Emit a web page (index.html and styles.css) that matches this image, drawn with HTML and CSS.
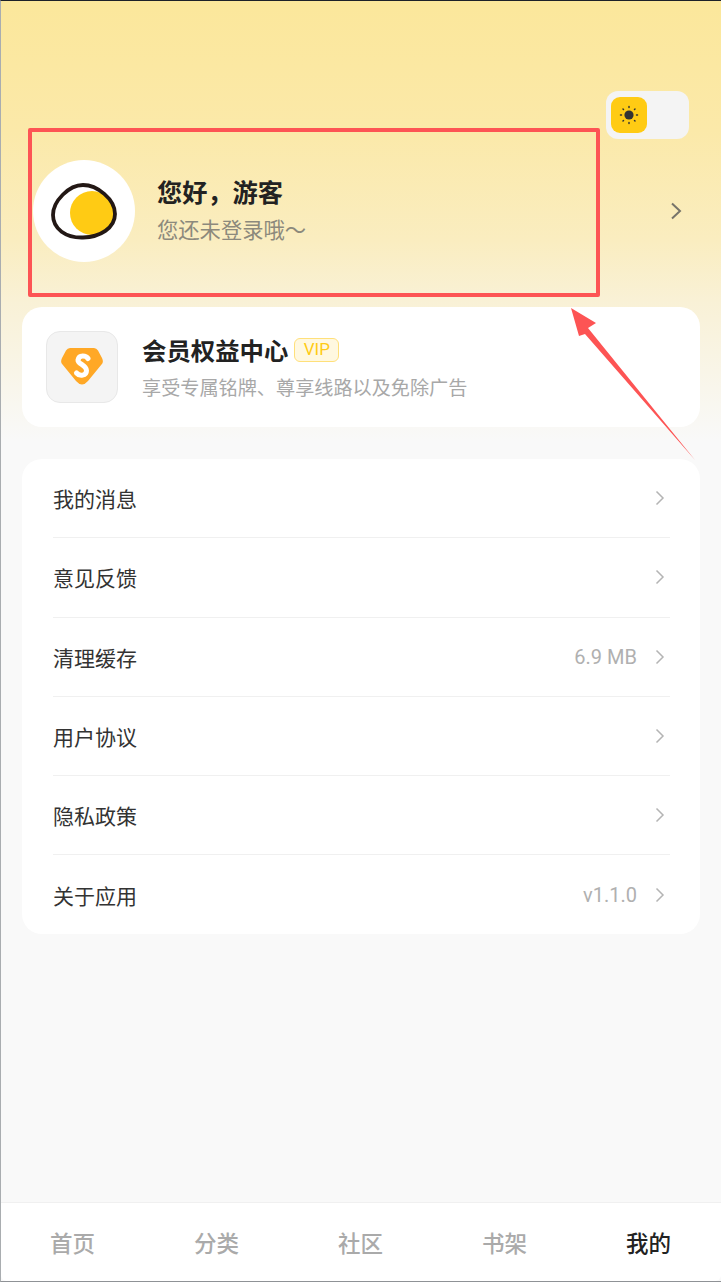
FILE: index.html
```html
<!DOCTYPE html>
<html lang="zh-CN">
<head>
	<meta charset="UTF-8">
	<meta name="viewport" content="width=device-width, initial-scale=1.0">
	<link rel="stylesheet" href="styles.css">
	<title>我的</title>
</head>
<body>
	<div class="app">
		<main class="page">
			<div class="theme-row">
				<div class="toggle">
					<div class="toggle-knob">
						<svg width="24" height="24" viewBox="0 0 24 24" aria-hidden="true">
							<circle cx="12" cy="12" r="4.600" fill="#333"/>
							<g stroke="#333" stroke-width="1.500" stroke-linecap="round">
								<path d="M12 3.500v1M12 19.500v1M3.500 12h1M19.500 12h1M6 6l.5 .5M17.500 17.500l.5 .5M6 18l.5-.5M17.500 6.500l.5-.5"/>
							</g>
						</svg>
					</div>
				</div>
			</div>
			<section class="profile">
				<div class="avatar">
					<svg width="68" height="58" viewBox="0 0 68 58" aria-hidden="true">
						<circle cx="42" cy="31" r="22" fill="#ffcb14"/>
						<path d="M3 33C3 19 19 3 33 3C47 3 65 17 65 32C65 46 50 55 33 55.500C16 56 3 47 3 33Z" fill="none" stroke="#231815" stroke-width="3.800"/>
					</svg>
				</div>
				<div class="profile-text">
					<div class="profile-name">您好，游客</div>
					<div class="profile-hint">您还未登录哦～</div>
				</div>
				<svg class="profile-arrow" width="12" height="18" viewBox="0 0 12 18" aria-hidden="true">
					<path d="M2 1.500L10 9L2 16.500" fill="none" stroke="#77746a" stroke-width="2"/>
				</svg>
			</section>
			<section class="card vip">
				<div class="vip-icon">
					<svg class="vip-gem" width="42" height="38" viewBox="0 0 42 38" aria-hidden="true">
						<path d="M9 0H33Q35.500 0 37 2.500L41 10Q43 14 40.500 16.500L27 33Q21 40 15 33L1.500 16.500Q-1 14 1 10L5 2.500Q6.500 0 9 0Z" fill="#ffa826"/>
						<path d="M27 10.500C25 7.500 18 6.500 17 12C16.500 16 25.500 17 25.500 22.500C25.500 28 18.500 28.500 15.500 25" fill="none" stroke="#fff" stroke-width="5" stroke-linecap="round"/>
					</svg>
				</div>
				<div class="vip-text">
					<div class="vip-title">会员权益中心 <span class="vip-badge">VIP</span></div>
					<div class="vip-sub">享受专属铭牌、尊享线路以及免除广告</div>
				</div>
			</section>
			<section class="card menu">
				<div class="menu-row"><span class="menu-label">我的消息</span><svg class="chev" width="10" height="16" viewBox="0 0 10 16"><path d="M1.500 1.500L8 8L1.500 14.500"/></svg></div>
				<div class="menu-row"><span class="menu-label">意见反馈</span><svg class="chev" width="10" height="16" viewBox="0 0 10 16"><path d="M1.500 1.500L8 8L1.500 14.500"/></svg></div>
				<div class="menu-row"><span class="menu-label">清理缓存</span><span class="menu-value">6.9 MB</span><svg class="chev" width="10" height="16" viewBox="0 0 10 16"><path d="M1.500 1.500L8 8L1.500 14.500"/></svg></div>
				<div class="menu-row"><span class="menu-label">用户协议</span><svg class="chev" width="10" height="16" viewBox="0 0 10 16"><path d="M1.500 1.500L8 8L1.500 14.500"/></svg></div>
				<div class="menu-row"><span class="menu-label">隐私政策</span><svg class="chev" width="10" height="16" viewBox="0 0 10 16"><path d="M1.500 1.500L8 8L1.500 14.500"/></svg></div>
				<div class="menu-row"><span class="menu-label">关于应用</span><span class="menu-value">v1.1.0</span><svg class="chev" width="10" height="16" viewBox="0 0 10 16"><path d="M1.500 1.500L8 8L1.500 14.500"/></svg></div>
			</section>
		</main>
		<nav class="tabbar">
			<span class="tab">首页</span>
			<span class="tab">分类</span>
			<span class="tab">社区</span>
			<span class="tab">书架</span>
			<span class="tab active">我的</span>
		</nav>
		<!-- annotation drawn on top of the screenshot -->
		<div class="mark-box"></div>
		<svg class="mark-arrow" width="130" height="156" viewBox="0 0 130 156" aria-hidden="true">
			<path d="M1 1L26 16L18 21L125 153L15 27L9 29Z" fill="#fd5454"/>
		</svg>
	</div>
</body>
</html>
```
FILE: styles.css
```css
* {
	box-sizing: border-box;
}

body {
	margin: 0;
	background: #f9f9f9;
	font-family: "Noto Sans CJK SC", "Noto Sans", Roboto, sans-serif;
}

.app {
	position: relative;
	display: flex;
	flex-direction: column;
	height: 1282px;
	border-top: 1px solid #1c2128;
	border-left: 1px solid #a9adb0;
	border-bottom: 1px solid #8f9296;
	background: linear-gradient(#fbe79b 0, #fbe9a9 130px, #faedc0 240px, #f9f1d6 300px, #f9f9f9 440px);
	overflow: hidden;
}

.page {
	flex: 1;
	padding: 90px 21px 0;
}

.theme-row {
	display: flex;
	justify-content: flex-end;
	height: 48px;
	padding-right: 11px;
}

.toggle {
	width: 83px;
	height: 48px;
	padding: 6px 5px;
	border-radius: 12px;
	background: #f4f4f4;
}

.toggle-knob {
	display: flex;
	align-items: center;
	justify-content: center;
	width: 36px;
	height: 36px;
	border-radius: 9px;
	background: #ffcb14;
}

.profile {
	display: flex;
	align-items: center;
	height: 102px;
	margin: 21px 0 45px;
	padding-left: 11px;
}

.avatar {
	display: flex;
	align-items: center;
	justify-content: center;
	flex-shrink: 0;
	width: 102px;
	height: 102px;
	border-radius: 50%;
	background: #fff;
}

.profile-text {
	flex: 1;
	margin-left: 22px;
	padding-bottom: 4px;
}

.profile-name {
	font-size: 25.200px;
	line-height: 34px;
	font-weight: 700;
	color: #222;
}

.profile-hint {
	margin-top: 6px;
	font-size: 21.300px;
	line-height: 30px;
	color: #8c897c;
}

.profile-arrow {
	margin-right: 18px;
}

.card {
	width: 678px;
	background: #fff;
	border-radius: 20px;
}

.vip {
	display: flex;
	align-items: center;
	height: 120px;
	padding-left: 24px;
}

.vip-icon {
	display: flex;
	align-items: center;
	justify-content: center;
	width: 72px;
	height: 72px;
	border: 1px solid #e8e8e8;
	border-radius: 14px;
	background: #f4f4f4;
}

.vip-gem {
	overflow: visible;
}

.vip-text {
	margin-left: 24px;
}

.vip-title {
	display: flex;
	align-items: center;
	gap: 6px;
	margin-top: -1px;
	font-size: 24.400px;
	line-height: 34px;
	font-weight: 600;
	color: #222;
}

.vip-badge {
	width: 45px;
	height: 24px;
	border: 1.500px solid #ffe07a;
	border-radius: 6px;
	background: #fff8e0;
	font-family: Roboto, sans-serif;
	font-size: 17px;
	font-weight: 400;
	line-height: 21px;
	text-align: center;
	color: #ffcb14;
}

.vip-sub {
	margin-top: 6px;
	font-size: 19.150px;
	line-height: 28px;
	color: #a8a8a8;
}

.menu {
	height: 475px;
	margin-top: 32px;
	padding: 0 30px 0 31px;
}

.menu-row {
	display: flex;
	align-items: center;
	height: 79.250px;
	border-bottom: 1px solid #f0f0f0;
}
.menu-row:last-child {
	border-bottom: none;
}

.menu-label {
	flex: 1;
	font-size: 21px;
	color: #333;
}

.menu-value {
	margin-right: 18px;
	font-family: Roboto, sans-serif;
	font-size: 20px;
	color: #b0b0b0;
}

.chev {
	margin-right: 5px;
}
.chev path {
	fill: none;
	stroke: #b4b4b4;
	stroke-width: 1.500;
}

.tabbar {
	display: flex;
	align-items: center;
	justify-content: space-between;
	height: 79px;
	padding: 0 50px 1px 49px;
	border-top: 1px solid #f0f0f0;
	border-radius: 0 0 6px 6px;
	background: #fff;
}

.tab {
	font-size: 22.500px;
	font-weight: 500;
	color: #aaa;
}
.tab.active {
	color: #222;
}

.mark-box {
	position: absolute;
	left: 27px;
	top: 127px;
	width: 572px;
	height: 169px;
	border: 4px solid #fd5454;
	border-radius: 2px;
}

.mark-arrow {
	position: absolute;
	left: 569px;
	top: 306px;
}
```
